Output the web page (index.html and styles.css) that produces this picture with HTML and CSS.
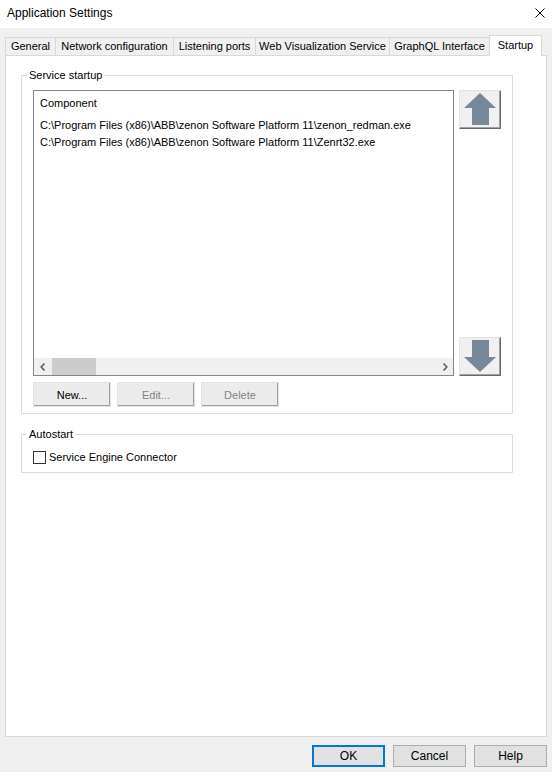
FILE: index.html
```html
<!DOCTYPE html>
<html>
<head>
<meta charset="utf-8">
<link rel="stylesheet" href="styles.css">
</head>
<body>
<div class="window">
  <div class="titlebar">
    <span class="title">Application Settings</span>
    <svg class="close" width="10" height="10" viewBox="0 0 10 10"><path d="M0.5 0.5L9.5 9.5M9.5 0.5L0.5 9.5" stroke="#000" stroke-width="1" fill="none"/></svg>
  </div>
  <div class="tabs">
    <div class="tab t-general">General</div>
    <div class="tab t-network">Network configuration</div>
    <div class="tab t-listen">Listening ports</div>
    <div class="tab t-web">Web Visualization Service</div>
    <div class="tab t-graphql">GraphQL Interface</div>
    <div class="tab tab-active t-startup">Startup</div>
  </div>
  <div class="panel">
    <fieldset class="group group-service">
      <legend>Service startup</legend>
      <div class="service-grid">
        <div class="listbox">
          <div class="list-header">Component</div>
          <div class="list-rows">
            <div class="list-row">C:\Program Files (x86)\ABB\zenon Software Platform 11\zenon_redman.exe</div>
            <div class="list-row">C:\Program Files (x86)\ABB\zenon Software Platform 11\Zenrt32.exe</div>
          </div>
          <div class="hscroll">
            <div class="sb-arrow"><svg width="6" height="8" viewBox="0 0 6 8"><path d="M4.5 0.5L1.2 4L4.5 7.5" stroke="#606060" stroke-width="1.6" fill="none"/></svg></div>
            <div class="sb-thumb"></div>
            <div class="sb-track"></div>
            <div class="sb-arrow"><svg width="6" height="8" viewBox="0 0 6 8"><path d="M1.5 0.5L4.8 4L1.5 7.5" stroke="#606060" stroke-width="1.6" fill="none"/></svg></div>
          </div>
        </div>
        <div class="arrows">
          <div class="arrow-btn"><svg width="40" height="37" viewBox="0 0 40 37"><polygon points="20,2 36,17 29,17 29,34 12,34 12,17 4,17" fill="#778899"/></svg></div>
          <div class="arrow-btn"><svg width="40" height="37" viewBox="0 0 40 37"><polygon points="12,2 29,2 29,19 36,19 20,34 4,19 12,19" fill="#778899"/></svg></div>
        </div>
        <div class="btn-row">
          <div class="btn3d">New...</div>
          <div class="btn3d disabled">Edit...</div>
          <div class="btn3d disabled">Delete</div>
        </div>
      </div>
    </fieldset>
    <fieldset class="group group-auto">
      <legend>Autostart</legend>
      <div class="check-row">
        <span class="checkbox"></span>
        <span class="check-label">Service Engine Connector</span>
      </div>
    </fieldset>
  </div>
  <div class="footer">
    <div class="dlg-btn default">OK</div>
    <div class="dlg-btn">Cancel</div>
    <div class="dlg-btn">Help</div>
  </div>
</div>
</body>
</html>
```
FILE: styles.css
```css
* { box-sizing: border-box; }
html, body { margin: 0; padding: 0; }
body {
  width: 552px;
  height: 772px;
  background: #f0f0f0;
  font-family: "Liberation Sans", Arial, sans-serif;
  font-size: 11px;
  color: #000;
  overflow: hidden;
}
.window { display: flex; flex-direction: column; height: 772px; }
.titlebar {
  height: 28px;
  background: #fff;
  display: flex;
  align-items: center;
  justify-content: space-between;
  padding: 0 7px 2px 7px;
}
.title { font-size: 12px; line-height: 14px; }
.close { margin-right: 0; }

.tabs {
  display: flex;
  align-items: flex-end;
  height: 20px;
  margin-top: 7px;
  padding-left: 5px;
}
.tab {
  height: 18px;
  border: 1px solid #d9d9d9;
  border-bottom: none;
  background: #f0f0f0;
  margin-right: -1px;
  text-align: center;
  line-height: 17px;
  white-space: nowrap;
}
.t-general { width: 51px; }
.t-network { width: 119px; }
.t-listen { width: 83px; }
.t-web { width: 135px; }
.t-graphql { width: 101px; }
.t-startup { width: 53px; }
.tab-active {
  height: 21px;
  margin-bottom: -1px;
  background: #fff;
  position: relative;
  z-index: 1;
  line-height: 17px;
  padding-top: 1px;
}

.panel {
  height: 682px;
  margin: 0 5px;
  background: #fff;
  border: 1px solid #d9d9d9;
  padding: 0 33px 0 15px;
}
.group {
  margin: 0;
  border: 1px solid #dcdcdc;
  padding: 0 0 0 5px;
  min-width: 0;
}
.group legend {
  padding: 0 2px;
  line-height: 13px;
  font-size: 11px;
}
.group-service { margin-top: 13px; padding-bottom: 6px; }
.service-grid {
  display: grid;
  grid-template-columns: 421px 42px;
  column-gap: 5px;
  margin: 8px 0 0 6px;
}
.listbox {
  height: 286px;
  border: 1px solid #828790;
  display: flex;
  flex-direction: column;
}
.list-header { padding: 6px 0 0 6px; line-height: 13px; }
.list-rows { flex: 1; padding: 7px 0 0 6px; }
.list-row { line-height: 17px; white-space: nowrap; }
.hscroll {
  height: 17px;
  background: #f0f0f0;
  display: flex;
  align-items: stretch;
}
.sb-arrow { width: 17px; display: flex; align-items: center; justify-content: center; }
.sb-thumb { width: 44px; margin: 0 0 0 1px; background: #cdcdcd; }
.sb-track { flex: 1; }
.arrows {
  display: flex;
  flex-direction: column;
  justify-content: space-between;
}
.arrow-btn {
  width: 42px;
  height: 39px;
  background: #f0f0f0;
  border-top: 1px solid #e3e3e3;
  border-left: 1px solid #e3e3e3;
  border-right: 1px solid #696969;
  border-bottom: 1px solid #696969;
  box-shadow: inset -1px -1px 0 #a0a0a0;
  display: flex;
}
.btn-row {
  grid-column: 1 / 3;
  display: flex;
  gap: 6px;
  margin-top: 6px;
}
.btn3d {
  width: 78px;
  height: 25px;
  background: #ececec;
  border-top: 1px solid #fff;
  border-left: 1px solid #fff;
  border-right: 1px solid #696969;
  border-bottom: 1px solid #696969;
  box-shadow: inset -1px -1px 0 #a0a0a0;
  outline: 1px solid #e3e3e3;
  outline-offset: -1px;
  display: flex;
  align-items: center;
  justify-content: center;
}
.btn3d.disabled { color: #838383; }

.group-auto { margin-top: 14px; padding-bottom: 8px; }
.check-row {
  display: flex;
  align-items: center;
  margin: 10px 0 0 6px;
  height: 13px;
}
.checkbox {
  width: 13px;
  height: 13px;
  border: 1px solid #333;
  background: #fff;
}
.check-label { margin-left: 3px; line-height: 13px; }

.footer {
  display: flex;
  justify-content: flex-end;
  gap: 8px;
  padding: 8px 5px 0 0;
}
.dlg-btn {
  width: 73px;
  height: 22px;
  background: #e1e1e1;
  border: 1px solid #adadad;
  display: flex;
  align-items: center;
  justify-content: center;
  font-size: 12px;
}
.dlg-btn.default { border: 2px solid #0078d7; }
```
